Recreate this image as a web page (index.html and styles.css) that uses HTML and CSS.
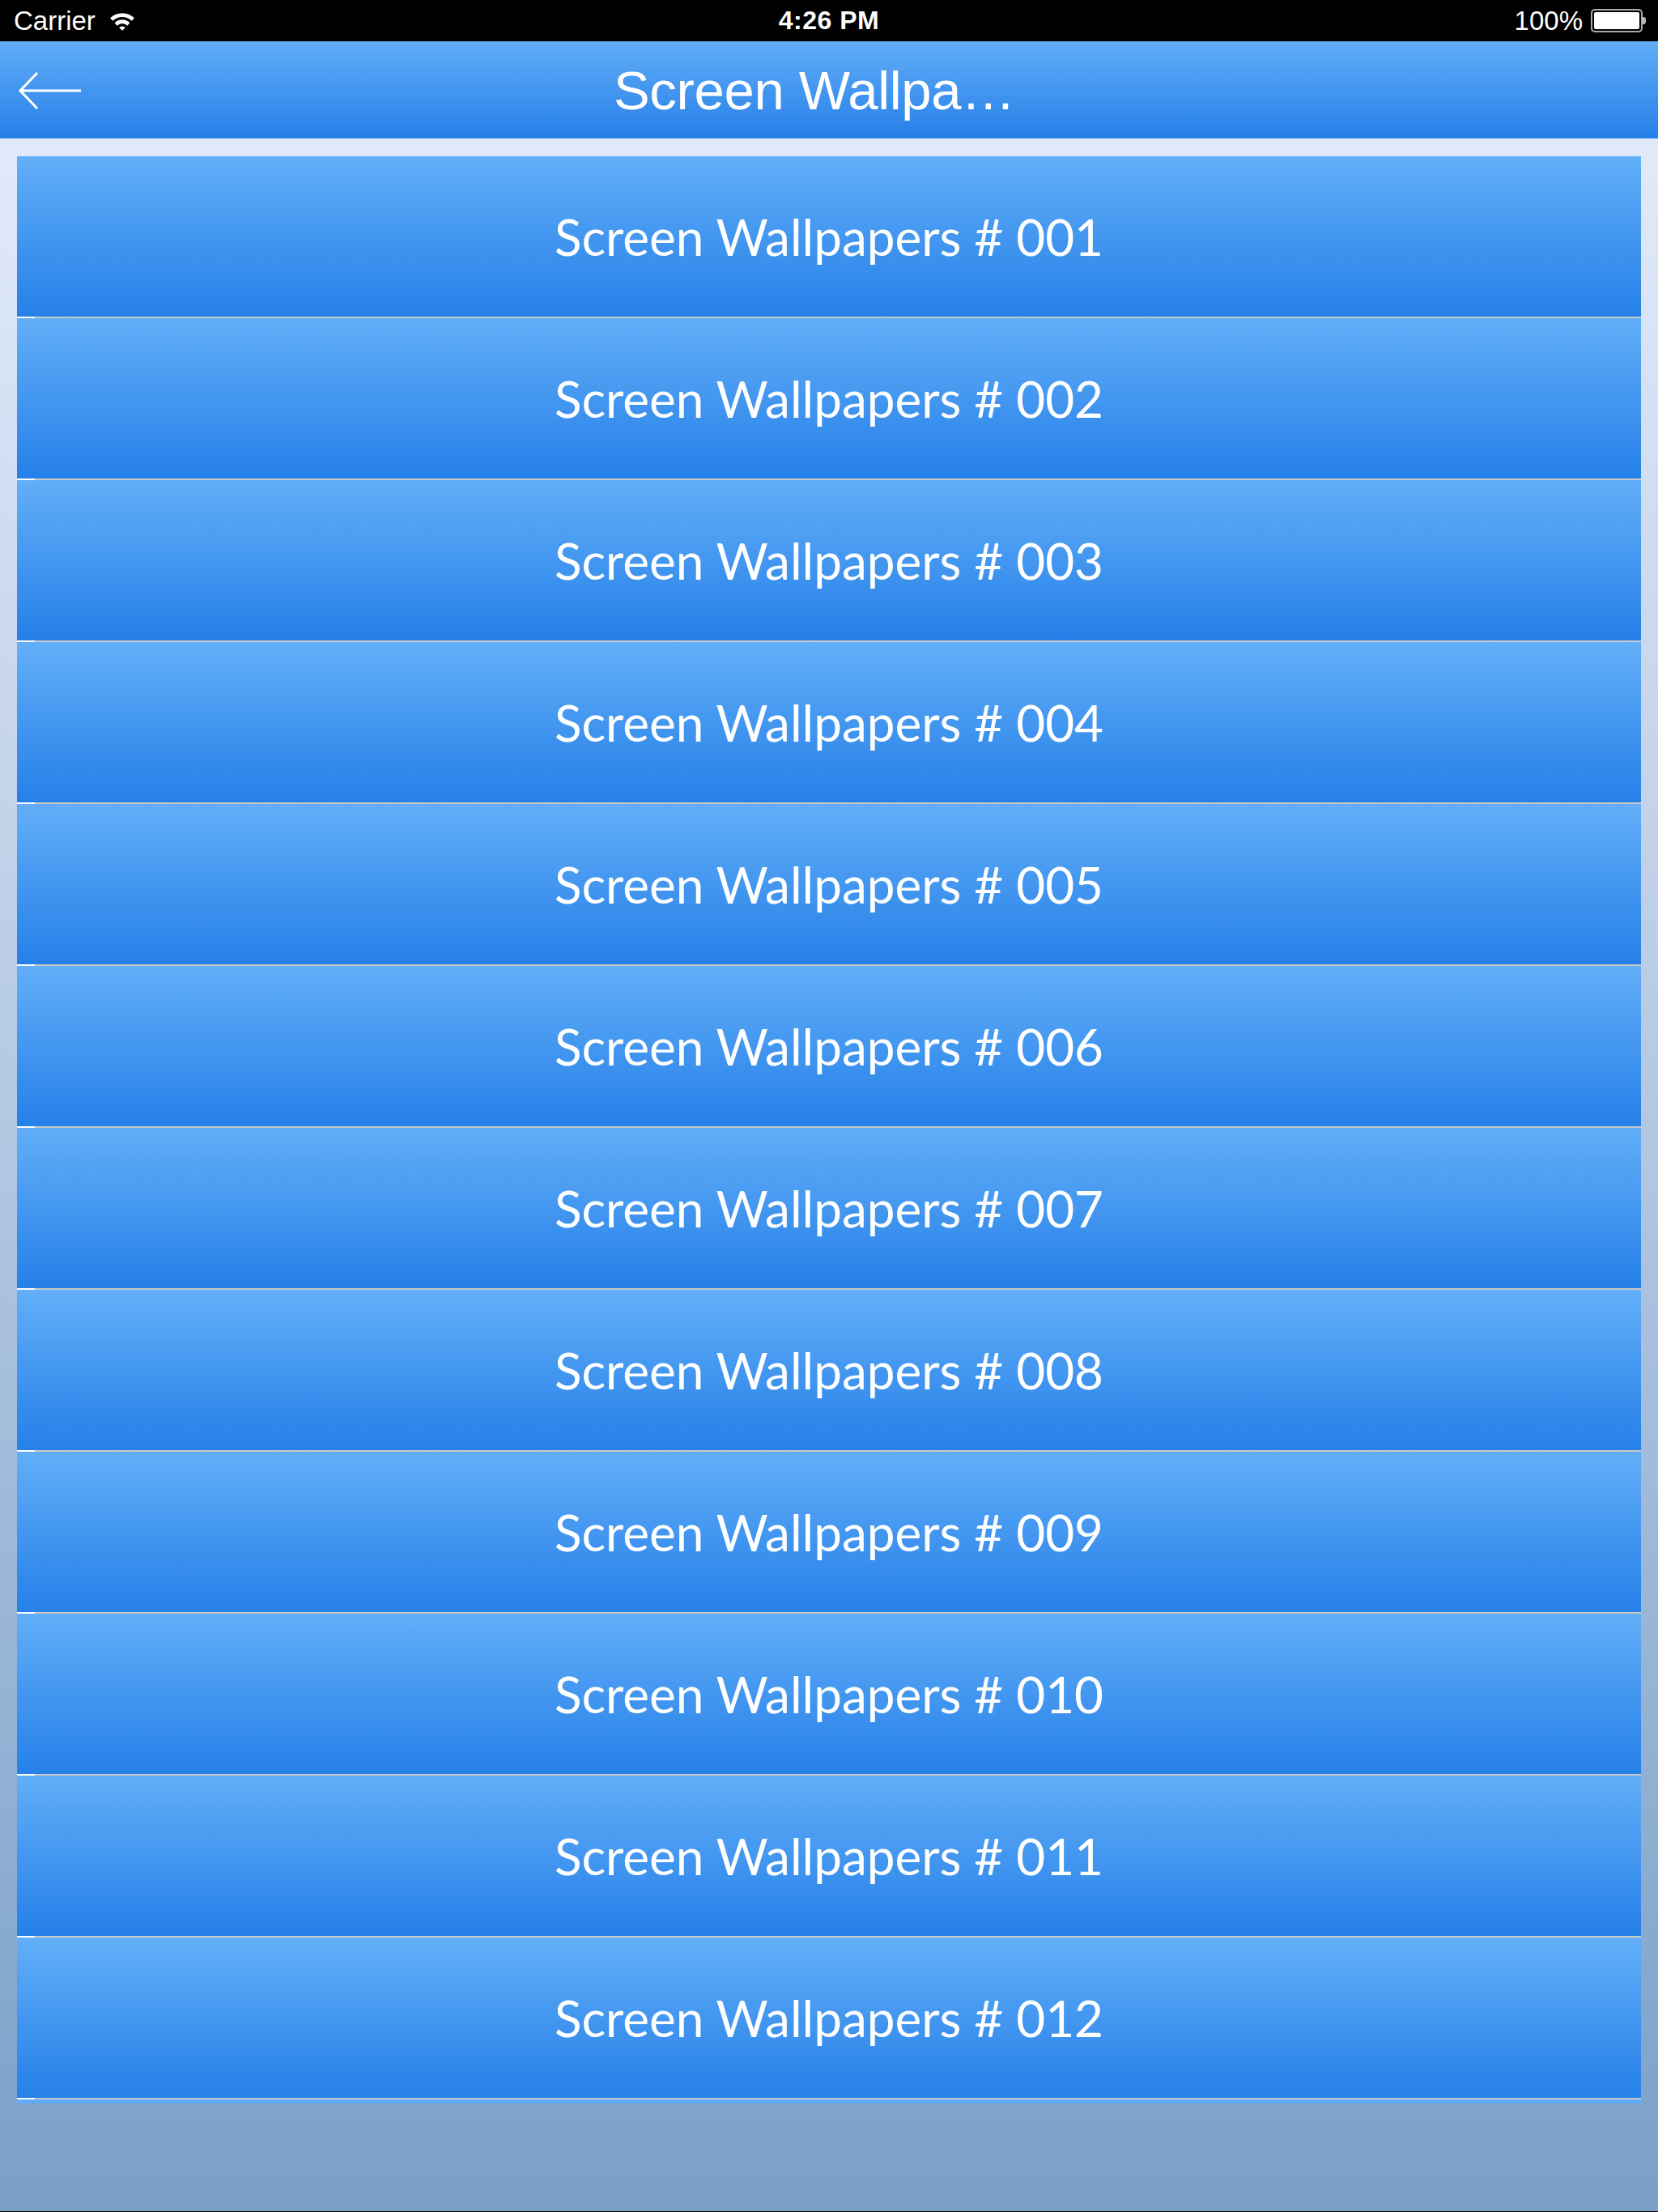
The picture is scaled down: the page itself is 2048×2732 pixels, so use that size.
FILE: index.html
```html
<!DOCTYPE html>
<html lang="en">
<head>
  <meta charset="UTF-8">
  <meta name="viewport" content="width=device-width, initial-scale=1">
  <title>Screen Wallpapers</title>
  <link rel="stylesheet" href="styles.css">
</head>
<body>

  <!-- status bar -->
  <div class="statusbar">
    <div class="sb-left">
      <span>Carrier</span>
      <svg class="wifi" width="32" height="24" viewBox="0 0 30 22">
        <path d="M1 7.5 A20 20 0 0 1 29 7.5 L26 10.8 A15.5 15.5 0 0 0 4 10.8 Z" fill="#fff"/>
        <path d="M6.2 13 A12.5 12.5 0 0 1 23.8 13 L20.8 16.3 A8 8 0 0 0 9.2 16.3 Z" fill="#fff"/>
        <path d="M11.4 18.6 A5 5 0 0 1 18.6 18.6 L15 22 Z" fill="#fff"/>
      </svg>
    </div>
    <div class="sb-time">4:26 PM</div>
    <div class="sb-right">
      <span>100%</span>
      <span class="battery"><span class="battery-fill"></span></span>
      <span class="battery-nub"></span>
    </div>
  </div>

  <!-- nav bar -->
  <header class="navbar">
    <svg class="back" width="80" height="48" viewBox="0 0 80 48">
      <path d="M24 2 L3 24 L24 46 M3 24 L78 24" stroke="#fff" stroke-width="3" fill="none"/>
    </svg>
    <h1>Screen Wallpa…</h1>
  </header>

  <main class="content">
    <ul class="list" id="list"></ul>
    <div class="list-peek"></div>
  </main>

  <script>
    var list = document.getElementById('list');
    for (var i = 1; i <= 12; i++) {
      var li = document.createElement('li');
      li.className = 'row';
      li.textContent = 'Screen Wallpapers # ' + ('00' + i).slice(-3);
      list.appendChild(li);
    }
  </script>

</body>
</html>
```

FILE: styles.css
```css
/* base */
html, body {
  margin: 0;
  padding: 0;
}
body {
  width: 2048px;
  height: 2732px;
  background: linear-gradient(#e1eafa 171px, #c3d3ea 1000px, #7aa0c8 2732px);
  font-family: "Liberation Sans", Arial, sans-serif;
  color: #fff;
  overflow: hidden;
  position: relative;
  border-bottom: 1px solid #000;
  box-sizing: border-box;
}

/* status bar */
.statusbar {
  height: 51px;
  background: #000;
  display: flex;
  align-items: center;
  justify-content: space-between;
  padding: 0 15px 0 17px;
  font-size: 33px;
  position: relative;
}
.sb-left {
  display: flex;
  align-items: center;
  gap: 17px;
}
.sb-time {
  position: absolute;
  left: 0;
  right: 0;
  text-align: center;
  font-weight: bold;
  font-size: 32px;
  letter-spacing: 0.5px;
}
.sb-right {
  display: flex;
  align-items: center;
}
.battery {
  margin-left: 10px;
  width: 56px;
  height: 21px;
  border: 2px solid #aaa;
  border-radius: 5px;
  padding: 2px;
  display: flex;
}
.battery-fill {
  flex: 1;
  background: #fff;
  border-radius: 2px;
}
.battery-nub {
  width: 4px;
  height: 9px;
  background: #bbb;
  border-radius: 0 3px 3px 0;
}

/* nav bar */
.navbar {
  height: 120px;
  background: linear-gradient(#61adf8, #2680e8);
  display: flex;
  align-items: center;
  justify-content: center;
  position: relative;
}
.navbar h1 {
  margin: 0 36px 0 0;
  font-weight: normal;
  font-size: 67px;
  letter-spacing: -0.3px;
}
.back {
  position: absolute;
  left: 22px;
  top: 37px;
}

/* list */
.content {
  padding: 22px 21px 0 21px;
}
.list {
  list-style: none;
  margin: 0;
  padding: 0;
}
.row {
  height: 198px;
  background: linear-gradient(#62aef8, #2580e8);
  display: flex;
  align-items: center;
  justify-content: center;
  font-family: Lato, "Open Sans", sans-serif;
  font-size: 62px;
  border-bottom: 2px solid #c8c8c8;
  position: relative;
}
.row::after {
  content: "";
  position: absolute;
  left: 0;
  bottom: -2px;
  width: 22px;
  height: 2px;
  background: #fff;
}
.list-peek {
  height: 5px;
  background: #5fabf7;
}
```
